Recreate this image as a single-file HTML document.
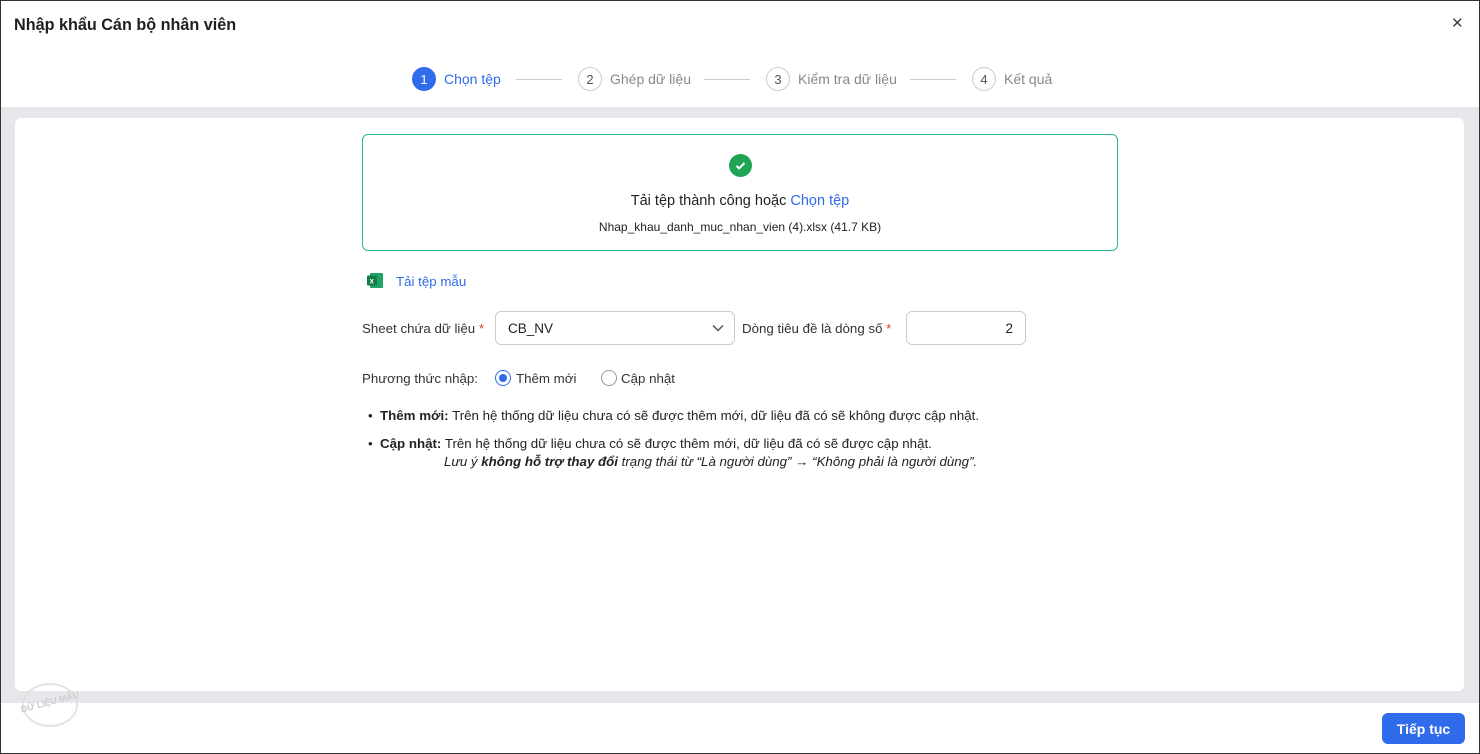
<!DOCTYPE html>
<html><head><meta charset="utf-8"><style>
*{box-sizing:border-box;margin:0;padding:0}
body{width:1480px;height:754px;overflow:hidden;font-family:"Liberation Sans",sans-serif;color:#212121;background:#fff;position:relative}
.frame{position:absolute;left:0;top:0;width:1480px;height:754px;border:1px solid #333;}
.title{position:absolute;left:14px;top:16px;font-size:16.2px;font-weight:bold;color:#1f1f1f}
.close{position:absolute;left:1451px;top:14px;font-size:15px;color:#444}
.steps{position:absolute;top:67px;left:0;width:1480px;height:24px}
.st{position:absolute;top:0;display:flex;align-items:center;font-size:14px;color:#888}
.c{width:24px;height:24px;border-radius:50%;border:1px solid #ccc;display:flex;align-items:center;justify-content:center;font-size:13px;color:#555;margin-right:8px;background:#fff}
.st.a{color:#2f6bea}.st.a .c{background:#2f6bea;border-color:#2f6bea;color:#fff}
.ln{position:absolute;top:12px;height:1px;background:#ccc;width:46px}
.gray{position:absolute;left:1px;top:107px;width:1478px;height:596px;background:#e6e7eb}
.card{position:absolute;left:15px;top:118px;width:1449px;height:573px;background:#fff;border-radius:6px}
.up{position:absolute;left:362px;top:134px;width:756px;height:117px;border:1px solid #2dbb8a;border-radius:6px;text-align:center}
.chk{position:absolute;left:366px;top:19px;width:23px;height:23px;border-radius:50%;background:#1ea453}
.t1{position:absolute;top:58px;width:100%;font-size:14.5px;color:#222}
.t2{position:absolute;top:85px;width:100%;font-size:12px;color:#222}
.blue{color:#2f6bea}
.lbl{position:absolute;font-size:13.3px;color:#333}
.red{color:#e53935}
.box{position:absolute;border:1px solid #ccc;border-radius:6px;background:#fff;font-size:13.5px}
.rad{position:absolute;width:16px;height:16px;border-radius:50%;border:1px solid #999;background:#fff}
.notes{position:absolute;left:368px;font-size:13.3px;color:#222}
.btn{position:absolute;left:1382px;top:713px;width:83px;height:31px;background:#2f6bea;border-radius:6px;color:#fff;font-weight:bold;font-size:14px;display:flex;align-items:center;justify-content:center}
</style></head><body>
<div class="title">Nhập khẩu Cán bộ nhân viên</div>
<div class="close">✕</div>
<div class="steps">
<div class="st a" style="left:412px"><span class="c">1</span>Chọn tệp</div>
<div class="ln" style="left:516px"></div>
<div class="st" style="left:578px"><span class="c">2</span>Ghép dữ liệu</div>
<div class="ln" style="left:704px"></div>
<div class="st" style="left:766px"><span class="c">3</span>Kiểm tra dữ liệu</div>
<div class="ln" style="left:910px"></div>
<div class="st" style="left:972px"><span class="c">4</span>Kết quả</div>
</div>
<div class="gray"></div>
<div class="card"></div>
<div class="up">
<div class="chk"><svg width="23" height="23" viewBox="0 0 23 23"><path d="M7.5 11.8l2.6 2.6 5.4-5.4" stroke="#fff" stroke-width="2" fill="none"/></svg></div>
<div class="t1">Tải tệp thành công hoặc <span class="blue">Chọn tệp</span></div>
<div class="t2">Nhap_khau_danh_muc_nhan_vien (4).xlsx (41.7 KB)</div>
</div>
<svg style="position:absolute;left:366px;top:272px" width="18" height="17" viewBox="0 0 18 17"><rect x="4" y="1" width="13" height="15" rx="1" fill="#21a366"/><rect x="1" y="3.5" width="10" height="10" rx="1" fill="#107c41"/><text x="3.5" y="11.5" font-size="8" fill="#fff" font-family="Liberation Sans" font-weight="bold">x</text></svg>
<div class="lbl blue" style="left:396px;top:274px;color:#2f6bea">Tải tệp mẫu</div>
<div class="lbl" style="left:362px;top:321px">Sheet chứa dữ liệu <span class="red">*</span></div>
<div class="box" style="left:495px;top:311px;width:240px;height:34px;padding:9px 12px">CB_NV
<svg style="position:absolute;right:10px;top:12px" width="12" height="8" viewBox="0 0 12 8"><path d="M1 1.5l5 5 5-5" stroke="#555" stroke-width="1.5" fill="none"/></svg></div>
<div class="lbl" style="left:742px;top:321px">Dòng tiêu đề là dòng số <span class="red">*</span></div>
<div class="box" style="left:906px;top:311px;width:120px;height:34px;padding:9px 12px;text-align:right">2</div>
<div class="lbl" style="left:362px;top:371px">Phương thức nhập:</div>
<div class="rad" style="left:495px;top:370px;border-color:#2f6bea"><div style="position:absolute;left:3px;top:3px;width:8px;height:8px;border-radius:50%;background:#2f6bea"></div></div>
<div class="lbl" style="left:516px;top:371px">Thêm mới</div>
<div class="rad" style="left:601px;top:370px"></div>
<div class="lbl" style="left:621px;top:371px">Cập nhật</div>
<div class="notes" style="top:408px">•&nbsp;&nbsp;<b>Thêm mới:</b> Trên hệ thống dữ liệu chưa có sẽ được thêm mới, dữ liệu đã có sẽ không được cập nhật.</div>
<div class="notes" style="top:436px">•&nbsp;&nbsp;<b>Cập nhật:</b> Trên hệ thống dữ liệu chưa có sẽ được thêm mới, dữ liệu đã có sẽ được cập nhật.</div>
<div class="notes" style="top:454px;left:444px;font-style:italic">Lưu ý <b>không hỗ trợ thay đổi</b> trạng thái từ “Là người dùng” → “Không phải là người dùng”.</div>
<div style="position:absolute;left:22px;top:683px;width:56px;height:44px;border:2px solid #ddd;border-radius:50%;opacity:.8"></div>
<div style="position:absolute;left:20px;top:697px;font-size:9px;font-weight:bold;color:#ccc;transform:rotate(-15deg)">DỮ LIỆU MẪU</div>
<div class="btn">Tiếp tục</div>
<div class="frame"></div>
</body></html>
